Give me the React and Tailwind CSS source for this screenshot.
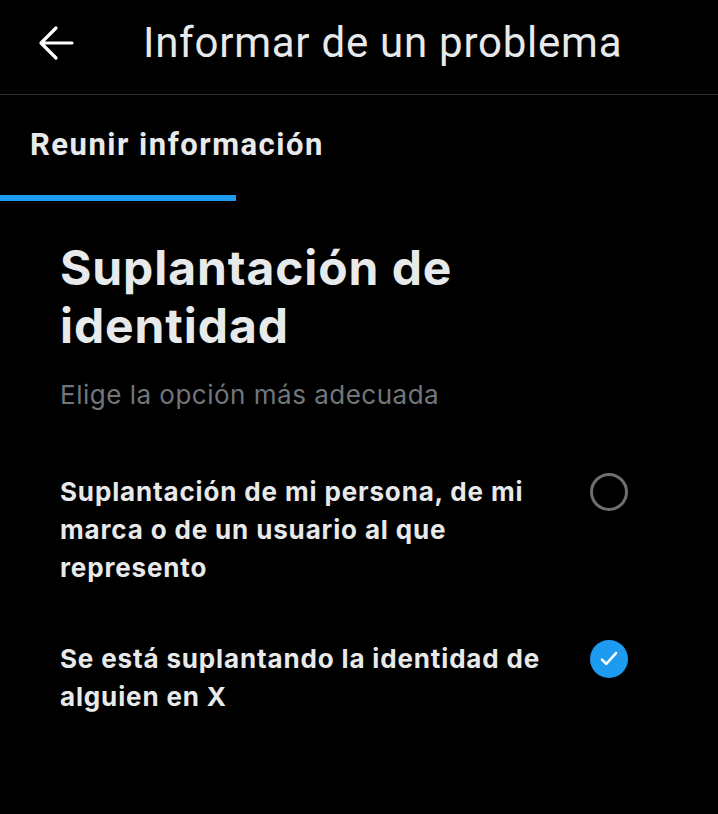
import React, { useState } from "react";

const options = [
  {
    id: "me",
    label: "Suplantación de mi persona, de mi marca o de un usuario al que represento",
  },
  {
    id: "someone",
    label: "Se está suplantando la identidad de alguien en X",
  },
];

function Radio({ checked }) {
  if (checked) {
    return (
      <span className="flex h-[38px] w-[38px] shrink-0 items-center justify-center rounded-full bg-[#1d9bf0]">
        <svg width="26" height="26" viewBox="0 0 24 24" fill="none">
          <path
            d="M5.5 12.5l4 4L18.5 6.5"
            stroke="#ffffff"
            strokeWidth="2.3"
            strokeLinecap="round"
            strokeLinejoin="round"
          />
        </svg>
      </span>
    );
  }
  return (
    <span className="block h-[38px] w-[38px] shrink-0 rounded-full border-[3px] border-[#6f6f6f]" />
  );
}

export default function App() {
  const [selected, setSelected] = useState("someone");

  return (
    <div className="min-h-[814px] w-full bg-black text-[#e7e9ea]">
      {/* top bar */}
      <div className="flex h-[95px] items-center border-b border-[#2f3336] pb-[8px] font-['Roboto',sans-serif]">
        <button className="ml-[38px] flex h-[36px] w-[36px] items-center justify-center">
          <svg width="36" height="36" viewBox="0 0 36 36" fill="none">
            <path
              d="M34 18H4M18 3L3 18l15 15"
              stroke="#ffffff"
              strokeWidth="3.2"
              strokeLinecap="round"
              strokeLinejoin="round"
            />
          </svg>
        </button>
        <h1 className="ml-[69px] text-[42px] leading-[48px] tracking-[0.75px] text-[#e7e9ea]">
          Informar de un problema
        </h1>
      </div>

      {/* step tab */}
      <div className="pt-[31px] font-['Roboto',sans-serif]">
        <div className="pl-[30px] text-[31px] font-bold leading-[38px] tracking-[1.5px] text-[#e7e9ea]">
          Reunir información
        </div>
        <div className="mt-[31px] h-[6px] w-[236px] bg-[#1d9bf0]" />
      </div>

      {/* content */}
      <div className="px-[60px] pt-[38px] font-['Inter','Open_Sans',sans-serif]">
        <h2 className="text-[48px] font-bold leading-[58px] tracking-[0.9px] text-[#e7e9ea]">
          Suplantación de
          <br />
          identidad
        </h2>
        <p className="mt-[22px] text-[26px] leading-[36px] tracking-[0.5px] text-[#71767b]">
          Elige la opción más adecuada
        </p>

        <div className="mt-[60px] flex flex-col gap-[53px]">
          {options.map((o) => (
            <button
              key={o.id}
              onClick={() => setSelected(o.id)}
              className="flex items-start justify-between gap-6 text-left"
            >
              <span className="max-w-[500px] text-[26px] font-bold leading-[38px] tracking-[0.85px] text-[#e7e9ea]">
                {o.label}
              </span>
              <span className="mr-[30px]">
                <Radio checked={selected === o.id} />
              </span>
            </button>
          ))}
        </div>
      </div>
    </div>
  );
}
